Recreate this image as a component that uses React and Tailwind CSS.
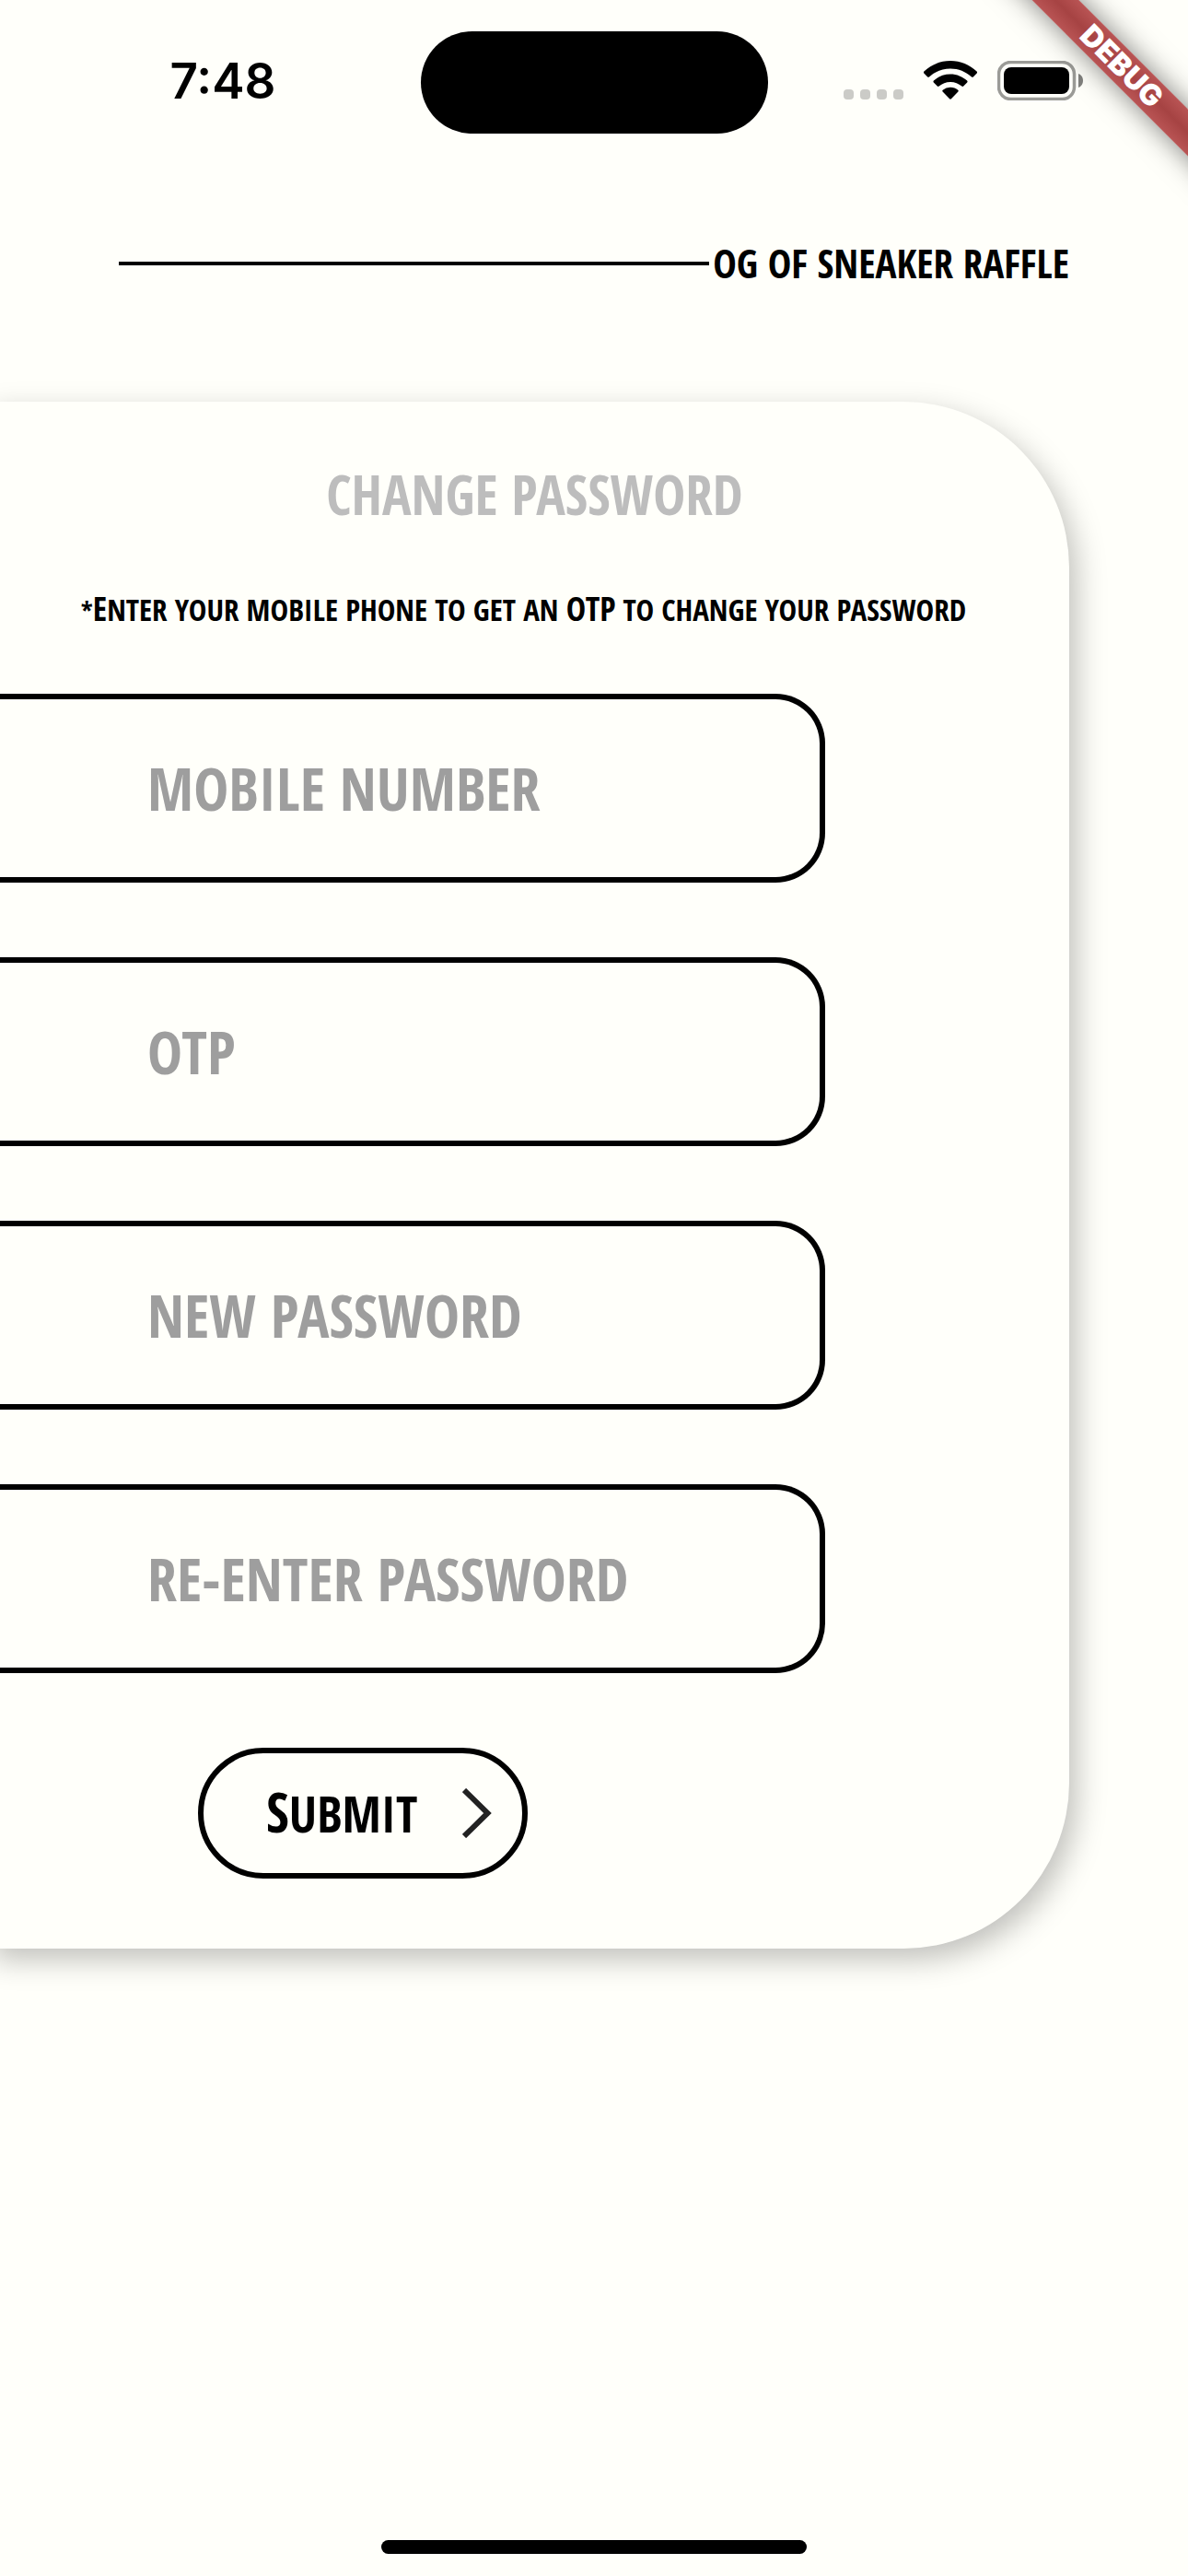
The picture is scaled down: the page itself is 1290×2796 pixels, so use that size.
const FIELDS = [
  { id: "mobile", label: "MOBILE NUMBER", type: "tel" },
  { id: "otp", label: "OTP", type: "text" },
  { id: "new-password", label: "NEW PASSWORD", type: "password" },
  { id: "confirm-password", label: "RE-ENTER PASSWORD", type: "password" },
];

function WifiIcon() {
  return (
    <svg viewBox="0 0 58 42" className="h-[42px] w-[58px]" aria-hidden="true">
      <path d="M29 0C40 0 50 4.300 57.600 11.500c.6.600.6 1.300.1 1.900l-3.900 4c-.5.500-1.200.5-1.800 0C45.800 11.700 37.700 8.400 29 8.400S12.200 11.700 6 17.400c-.6.500-1.300.5-1.800 0l-3.900-4c-.5-.6-.5-1.300.1-1.900C8 4.300 18 0 29 0Z" />
      <path d="M29 14.500c7 0 13.300 2.700 18.100 7.100.6.600.6 1.300.1 1.900l-4 4c-.5.600-1.200.6-1.900.1A18.200 18.200 0 0 0 29 22.900c-4.700 0-9 1.800-12.300 4.700-.7.500-1.400.5-1.900-.1l-4-4c-.5-.6-.5-1.300.1-1.900A26.600 26.600 0 0 1 29 14.500Z" />
      <path d="M29 28.700c3.200 0 6.100 1.200 8.300 3.100.6.600.6 1.200.1 1.800l-7.500 7.700c-.5.600-1.300.6-1.800 0l-7.500-7.700c-.5-.6-.5-1.200.1-1.800a12.600 12.600 0 0 1 8.300-3.100Z" />
    </svg>
  );
}

function BatteryIcon() {
  return (
    <svg viewBox="0 0 93 43" className="h-[43px] w-[93px]" aria-hidden="true">
      <rect x="1.500" y="1.500" width="82" height="40" rx="13" fill="none" stroke="#9b9b97" strokeWidth="3.500" />
      <rect x="7" y="7" width="71" height="29" rx="8" />
      <path d="M88 14c3 1 5 4 5 7.500S91 28 88 29Z" fill="#80807d" />
    </svg>
  );
}

function StatusBar() {
  return (
    <header className="grid h-[178px] grid-cols-3 items-start pt-[34px]">
      <div className="flex h-[108px] items-center justify-center pl-[54px] font-['Inter',sans-serif] text-[53px] font-semibold leading-none">
        7:48
      </div>
      <div className="h-[111px] w-[377px] justify-self-center rounded-full bg-black" />
      <div className="flex h-[106px] items-center pl-14">
        <div className="mt-[30px] flex gap-[7px]">
          <i className="size-[11px] rounded-[4px] bg-[#cbcbc7]" />
          <i className="size-[11px] rounded-[4px] bg-[#cbcbc7]" />
          <i className="size-[11px] rounded-[4px] bg-[#cbcbc7]" />
          <i className="size-[11px] rounded-[4px] bg-[#cbcbc7]" />
        </div>
        <div className="ml-[22px] flex items-center gap-[22px]">
          <WifiIcon />
          <BatteryIcon />
        </div>
      </div>
    </header>
  );
}

function DebugBanner() {
  return (
    <div className="pointer-events-none absolute top-0 right-0 size-[240px] overflow-hidden">
      <div className="absolute top-[54px] right-[-128px] flex h-9 w-[400px] rotate-45 items-center justify-center bg-linear-to-b from-[#b95454] via-[#a64343] to-[#b95454] font-['Inter',sans-serif] text-[32px] font-black leading-none text-white shadow-[0_0_30px_rgba(0,0,0,0.5)]">
        DEBUG
      </div>
    </div>
  );
}

export default function App() {
  return (
    <div className="relative flex min-h-screen flex-col overflow-hidden bg-[#fffffa] font-['Open_Sans_Condensed','Open_Sans',sans-serif] font-bold text-black">
      <StatusBar />
      <DebugBanner />

      <div className="flex h-[258px] items-start px-[10%] pt-[76px]">
        <div className="flex h-16 w-full items-center">
          <div className="h-[4px] flex-1 bg-black" />
          <p className="pl-1 text-[43px] leading-[66px] whitespace-nowrap">OG OF SNEAKER RAFFLE</p>
        </div>
      </div>

      <main className="mr-[10%] -ml-4 rounded-r-[180px] bg-[#fffffa] pb-[76px] pl-4 shadow-[8px_12px_32px_rgba(0,0,0,0.25)]">
        <h1 className="pt-[60px] text-center text-[59px] leading-[80px] text-[#bdbdbd]">CHANGE PASSWORD</h1>
        <p className="mt-[52px] pr-6 text-center text-[33px] leading-[66px] whitespace-nowrap uppercase">
          <span className="text-[28px] font-normal">*</span>
          <span className="text-[36px]">E</span>nter your mobile phone to get an{" "}
          <span className="text-[36px]">OTP</span> to change your password
        </p>
        <form className="mt-[57px]" onSubmit={(e) => e.preventDefault()}>
          <div className="mr-[265px] -ml-4 grid gap-[81px]">
            {FIELDS.map((f) => (
              <input
                key={f.id}
                id={f.id}
                type={f.type}
                aria-label={f.label}
                placeholder={f.label}
                className="h-[205px] w-full rounded-r-[54px] border-6 border-l-0 border-black bg-transparent pl-[176px] text-[64px] placeholder:text-[#9e9e9e] placeholder:opacity-100"
              />
            ))}
          </div>
          <button
            type="submit"
            className="mt-[81px] ml-[215px] flex h-[142px] w-[358px] items-center justify-between rounded-full border-6 border-black pr-[33px] pl-[68px] text-[54px] leading-none uppercase"
          >
            <span className="pb-1">
              <span className="text-[60px]">S</span>ubmit
            </span>
            <svg viewBox="0 0 32 54" className="h-[54px] w-8" fill="none" stroke="#222" strokeWidth="6" aria-hidden="true">
              <path d="M2 2l25.500 25L2 52" />
            </svg>
          </button>
        </form>
      </main>

      <div className="mt-auto mb-6 h-[15px] w-[462px] self-center rounded-full bg-black" />
    </div>
  );
}
